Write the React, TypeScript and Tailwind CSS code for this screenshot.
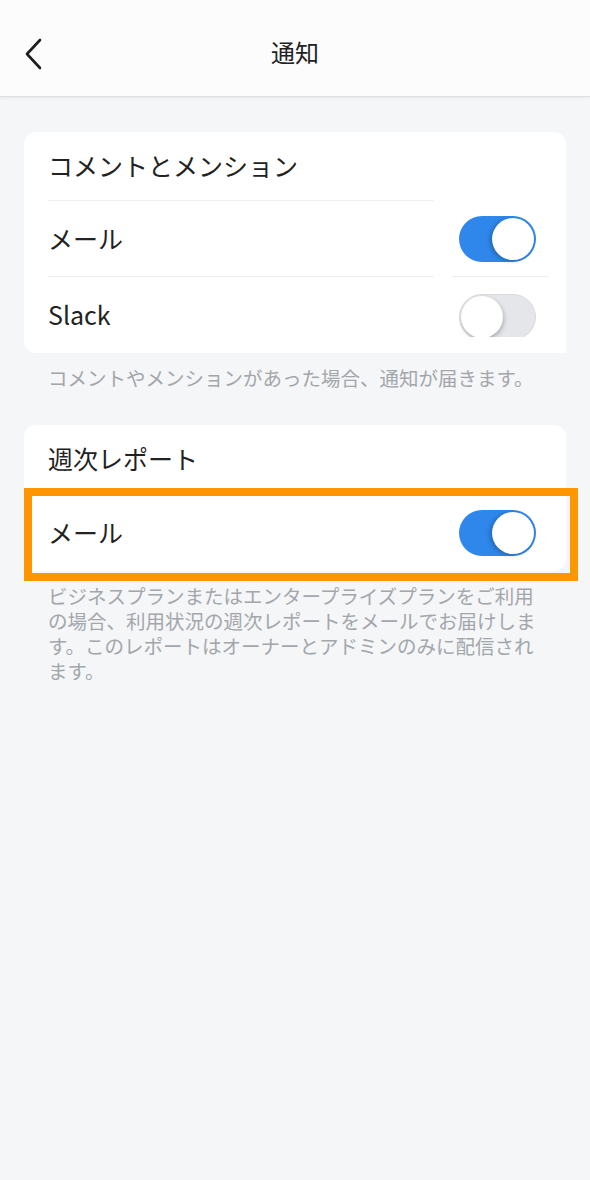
import { ReactNode } from "react";

const FONT = {
  fontFamily: '"Noto Sans CJK JP", "Noto Sans", "Liberation Sans", sans-serif',
};

function Toggle({ on }: { on: boolean }) {
  if (on) {
    return (
      <div className="relative w-[77px] h-[46px] rounded-full bg-[#2f86eb]">
        <div className="absolute right-[2px] top-[2px] size-[42px] rounded-full bg-white shadow-[-2px_1px_4px_rgba(0,0,0,0.25)]" />
      </div>
    );
  }
  return (
    <div className="relative w-[77px] h-[46px] rounded-full bg-[#e5e6ea] border border-[#d9dadd]">
      <div className="absolute left-[1px] top-[1px] size-[42px] rounded-full bg-white shadow-[1px_2px_4px_rgba(0,0,0,0.25)]" />
    </div>
  );
}

function TitleRow({ children }: { children: ReactNode }) {
  return (
    <div className="h-[69px] flex">
      <div className="ml-[24px] w-[386px] border-b border-[#eceef0] flex items-center text-[25px] text-[#222]">
        {children}
      </div>
    </div>
  );
}

interface SwitchRowProps {
  label: string;
  on: boolean;
  divider?: boolean;
  clip?: boolean;
}

function SwitchRow({ label, on, divider, clip }: SwitchRowProps) {
  const line = divider ? "border-b border-[#eceef0]" : "";
  return (
    <div className="h-[76px] flex">
      <div
        className={`ml-[24px] w-[386px] flex items-center text-[25px] text-[#222] ${line}`}
      >
        {label}
      </div>
      <div className={`ml-[18px] w-[97px] flex items-center pl-[7px] ${line}`}>
        {clip ? (
          <div className="h-[43px] overflow-hidden self-start mt-[17px]">
            <Toggle on={on} />
          </div>
        ) : (
          <Toggle on={on} />
        )}
      </div>
    </div>
  );
}

function Footnote({ children }: { children: ReactNode }) {
  return (
    <p className="mt-[12px] ml-[48px] w-[490px] text-[19.5px] leading-[25px] text-[#a3a6ab]">
      {children}
    </p>
  );
}

export default function App() {
  return (
    <div className="min-h-[1180px] bg-[#f5f6f8]" style={FONT}>
      <header className="h-[97px] bg-[#fcfcfd] border-b border-[#dfe0e3] shadow-[0_1px_2px_rgba(0,0,0,0.06)] relative flex items-center justify-center pt-[10px]">
        <svg
          className="absolute left-[22px] top-[37px]"
          width="24"
          height="34"
          viewBox="0 0 24 34"
          fill="none"
        >
          <path
            d="M18 3 L5 17 L18 31"
            stroke="#1d1d1f"
            strokeWidth="2.6"
            strokeLinecap="round"
            strokeLinejoin="round"
          />
        </svg>
        <h1 className="text-[24px] text-[#222] -mt-[3px]">通知</h1>
      </header>

      <section className="mt-[35px] mx-[24px] bg-white rounded-t-[12px] rounded-bl-[12px]">
        <TitleRow>コメントとメンション</TitleRow>
        <SwitchRow label="メール" on divider />
        <SwitchRow label="Slack" on={false} clip />
      </section>
      <Footnote>コメントやメンションがあった場合、通知が届きます。</Footnote>

      <section className="mt-[35px] mx-[24px] bg-white rounded-[12px]">
        <TitleRow>週次レポート</TitleRow>
        <div className="relative">
          <div className="h-[77px] flex">
            <div className="ml-[24px] w-[386px] flex items-center text-[25px] text-[#222]">
              メール
            </div>
            <div className="ml-[18px] w-[97px] flex items-center pl-[7px]">
              <Toggle on />
            </div>
          </div>
          {/* highlight frame */}
          <div className="absolute -top-[6px] -bottom-[10px] left-0 -right-[12px] border-[8px] border-[#ff9500]" />
        </div>
      </section>
      <Footnote>
        ビジネスプランまたはエンタープライズプランをご利用の場合、利用状況の週次レポートをメールでお届けします。このレポートはオーナーとアドミンのみに配信されます。
      </Footnote>
    </div>
  );
}
